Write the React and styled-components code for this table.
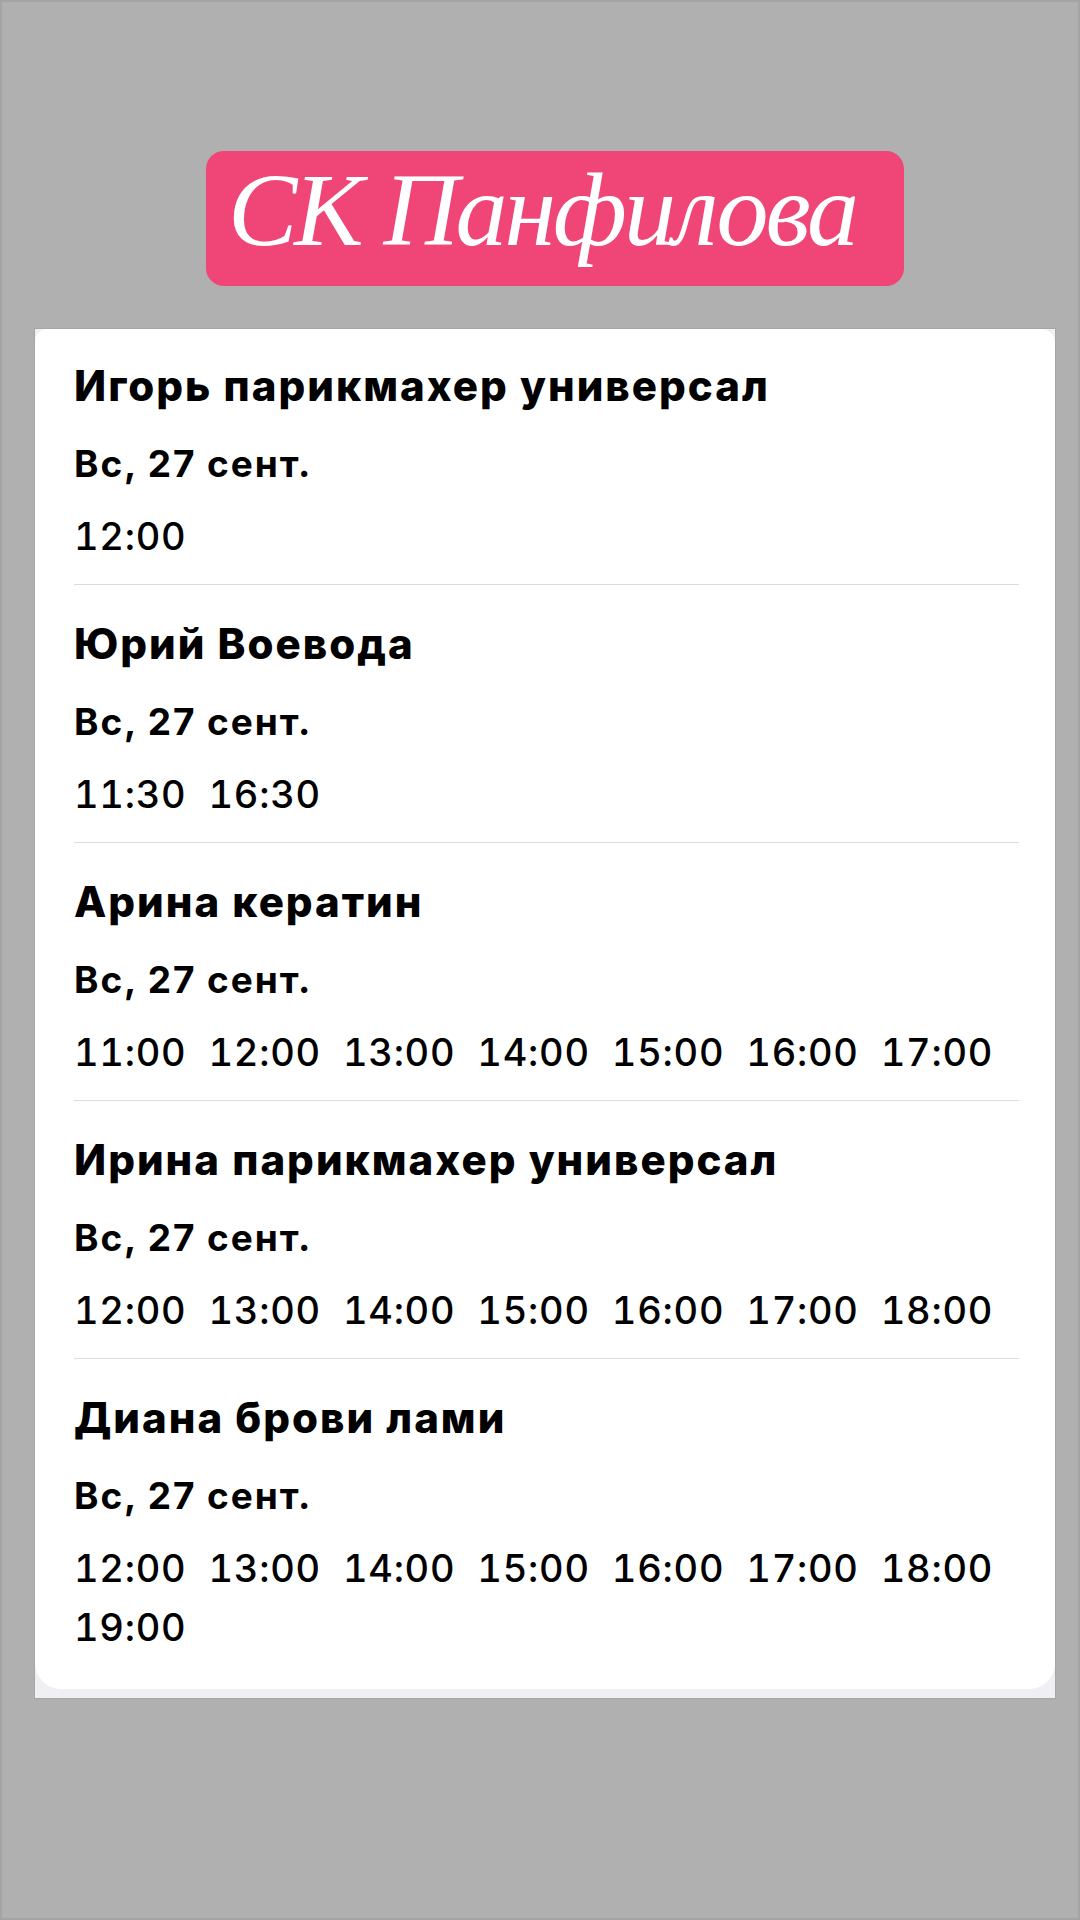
import React from "react";
import styled, { createGlobalStyle } from "styled-components";

const Global = createGlobalStyle`
  html, body { margin: 0; padding: 0; background: #b0b0b0; }
  * { box-sizing: border-box; }
`;

const Page = styled.div`
  width: 1080px;
  min-height: 1920px;
  background: #b0b0b0;
  border: 2px solid #a4a4a4;
  display: flex;
  flex-direction: column;
  align-items: stretch;
  padding: 149px 22px 0 32px;
`;

const Header = styled.div`
  align-self: center;
  width: 698px;
  height: 135px;
  margin-left: 20px;
  background: #ef4677;
  border-radius: 18px;
  display: flex;
  align-items: center;
  justify-content: center;
  padding-right: 26px;
`;

const HeaderTitle = styled.h1`
  margin: 0;
  padding-bottom: 17px;
  font-family: "Liberation Serif", serif;
  font-style: italic;
  font-weight: 400;
  font-size: 104px;
  letter-spacing: -3px;
  color: #ffffff;
  line-height: 1;
`;

const Card = styled.div`
  margin-top: 42px;
  background: #efeff4;
  border: 1px solid #a6a6a6;
  padding-bottom: 9px;
`;

const CardInner = styled.div`
  background: #ffffff;
  border-radius: 12px 14px 26px 26px;
  padding: 0 36px 0 39px;
`;

const Section = styled.div`
  padding: ${(p) => (p.$first ? "32px" : "34px")} 0 ${(p) => (p.$last ? "32px" : "18px")};
  border-top: ${(p) => (p.$first ? "none" : "1.5px solid #dcdcdc")};
  display: flex;
  flex-direction: column;
`;

const Name = styled.div`
  font-family: Inter, "Noto Sans", sans-serif;
  font-weight: 800;
  font-size: 42px;
  line-height: 50px;
  letter-spacing: 2px;
  color: #000;
`;

const DateLine = styled.div`
  margin-top: 31px;
  font-family: Inter, "Noto Sans", sans-serif;
  font-weight: 700;
  font-size: 37px;
  line-height: 44px;
  letter-spacing: 1.9px;
  color: #000;
`;

const Times = styled.div`
  margin-top: 21px;
  display: flex;
  flex-wrap: wrap;
  column-gap: 22px;
`;

const Time = styled.span`
  font-family: Inter, "Noto Sans", sans-serif;
  font-weight: 500;
  font-size: 38px;
  line-height: 59px;
  letter-spacing: 0.75px;
  font-variant-numeric: tabular-nums;
  color: #000;
`;

const data = [
  { name: "Игорь парикмахер универсал", times: ["12:00"] },
  { name: "Юрий Воевода", times: ["11:30", "16:30"] },
  {
    name: "Арина кератин",
    times: ["11:00", "12:00", "13:00", "14:00", "15:00", "16:00", "17:00"],
  },
  {
    name: "Ирина парикмахер универсал",
    times: ["12:00", "13:00", "14:00", "15:00", "16:00", "17:00", "18:00"],
  },
  {
    name: "Диана брови лами",
    times: ["12:00", "13:00", "14:00", "15:00", "16:00", "17:00", "18:00", "19:00"],
  },
];

export default function App() {
  return (
    <>
      <Global />
      <Page>
        <Header>
          <HeaderTitle>СК Панфилова</HeaderTitle>
        </Header>
        <Card>
          <CardInner>
            {data.map((d, i) => (
              <Section key={d.name} $first={i === 0} $last={i === data.length - 1}>
                <Name>{d.name}</Name>
                <DateLine>Вс, 27 сент.</DateLine>
                <Times>
                  {d.times.map((t) => (
                    <Time key={t}>{t}</Time>
                  ))}
                </Times>
              </Section>
            ))}
          </CardInner>
        </Card>
      </Page>
    </>
  );
}
